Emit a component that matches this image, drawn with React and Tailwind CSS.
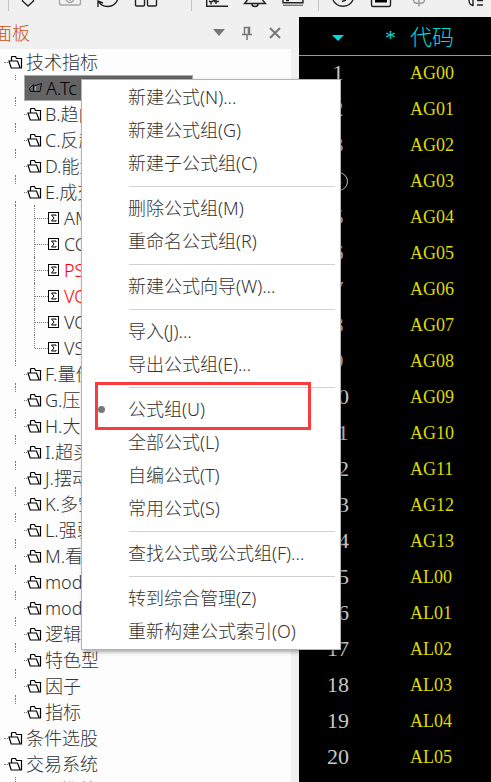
import React from 'react';

const TREE = [
  { label: 'A.Tc', selected: true },
  { label: 'B.趋向型' },
  { label: 'C.反趋向型' },
  { label: 'D.能量型' },
  {
    label: 'E.成交量型',
    children: [
      { label: 'AMO' },
      { label: 'CCL' },
      { label: 'PSY', hot: true },
      { label: 'VOL', hot: true },
      { label: 'VOSC' },
      { label: 'VSTD' },
    ],
  },
  { label: 'F.量价型' },
  { label: 'G.压力型' },
  { label: 'H.大势型' },
  { label: 'I.超买型' },
  { label: 'J.摆动型' },
  { label: 'K.多空型' },
  { label: 'L.强弱型' },
  { label: 'M.看盘型' },
  { label: 'mod1' },
  { label: 'mod2' },
  { label: '逻辑型' },
  { label: '特色型' },
  { label: '因子' },
  { label: '指标' },
];

const MENU = [
  ['新建公式(N)...', '新建公式组(G)', '新建子公式组(C)'],
  ['删除公式组(M)', '重命名公式组(R)'],
  ['新建公式向导(W)...'],
  ['导入(J)...', '导出公式组(E)...'],
  ['公式组(U)', '全部公式(L)', '自编公式(T)', '常用公式(S)'],
  ['查找公式或公式组(F)...'],
  ['转到综合管理(Z)', '重新构建公式索引(O)'],
];

const CHECKED = '公式组(U)';
const CIRCLED = 4;

const CODES = [
  'AG00', 'AG01', 'AG02', 'AG03', 'AG04', 'AG05', 'AG06', 'AG07', 'AG08', 'AG09',
  'AG10', 'AG11', 'AG12', 'AG13', 'AL00', 'AL01', 'AL02', 'AL03', 'AL04', 'AL05',
];

const ToolButton = ({ label, children }) => (
  <button aria-label={label} className="w-[38px] h-[17px] shrink-0 flex justify-center text-[#222]">
    <svg width="24" height="12" viewBox="0 0 24 12" fill="none" stroke="currentColor" strokeWidth="1.4">
      {children}
    </svg>
  </button>
);

const ToolDivider = () => <span className="w-px h-[11px] shrink-0 bg-[#c4c4c4]" />;

function Toolbar() {
  return (
    <div className="flex h-[17px] shrink-0 overflow-hidden">
      <div className="flex pl-2 pr-1">
        <ToolDivider />
        <ToolButton label="下载"><path d="M6.500 0v1l5.500 5 5.500-5V0" /></ToolButton>
      </div>
      <div className="flex pr-[26px]">
        <ToolButton label="截图">
          <g stroke="#a8a8a8">
            <path d="M1.500 0v3.500q0 1.500 1.500 1.500h18q1.500 0 1.500-1.500V0" />
            <path d="M8 0q4 5 8 0M12 0v1" />
          </g>
        </ToolButton>
        <ToolButton label="刷新"><path d="M2 7V1l5 2M2.500 1C6 8.500 18 8.500 21.500 0" /></ToolButton>
        <ToolButton label="布局"><path d="M1.500 0v5q0 1 1 1h7q1 0 1-1V0M13.500 0v5q0 1 1 1h7q1 0 1-1V0" /></ToolButton>
      </div>
      <ToolDivider />
      <div className="flex px-[6px]">
        <ToolButton label="图表"><path d="M1 6.300h22M1.700 0v6M4 1l2 1v2.500M6 2l4-2M11 0v4M9 1.500h5" /></ToolButton>
        <ToolButton label="提醒"><path d="M4.500 0L1.500 3.500h21L19.500 0M9 4q0 2.500 3 2.500T15 4" /></ToolButton>
        <ToolButton label="抽屉">
          <path d="M2 0v2.700h20V0M5 .5h3" />
          <path stroke="#777" d="M2 5.300h20" />
        </ToolButton>
      </div>
      <ToolDivider />
      <div className="flex px-[5px]">
        <ToolButton label="时钟"><path d="M2 0q3 6.300 10 6.300T22 0M11 1.500L15 0" /></ToolButton>
        <ToolButton label="窗口">
          <path d="M2.500 0v5q0 1.500 1.500 1.500h16q1.500 0 1.500-1.500V0" />
          <rect x="6" y="0" width="12" height="2.500" fill="#000" stroke="none" />
        </ToolButton>
        <ToolButton label="资金"><path stroke="#999" d="M6.500 0q0 3.500 5.500 3.500T17.500 0M12 0v6.500" /></ToolButton>
      </div>
      <div className="flex pl-4">
        <ToolButton label="列表"><path d="M3 0q0 5 4 5.500V0M11 .5h6M11 5h6" /></ToolButton>
      </div>
    </div>
  );
}

const FolderIcon = ({ open }) =>
  open ? (
    <svg width="15" height="14" viewBox="0 0 15 14" fill="none" stroke="#111">
      <path d="M1.500 7.500L5.500 3.500v7H2.500zM5.500 5l8-2.500-1.500 8-6.500 0" />
      <path d="M7.500 5.500v4" stroke="#aaa" />
    </svg>
  ) : (
    <svg width="15" height="14" viewBox="0 0 15 14" fill="none" stroke="#000" strokeWidth="1.200">
      <path d="M3.500 5.500V2.500q0-1 1-1h3l1 2h5v9.500H3.200L1 6h8.500l2.500 6.500" />
    </svg>
  );

const SigmaIcon = () => (
  <svg width="12" height="12" viewBox="0 0 12 12" fill="none" stroke="#000">
    <rect x="0.500" y="0.500" width="10" height="11" fill="#fff" />
    <path d="M8 4V3H3.500l2.500 3-2.500 3H8V8" />
  </svg>
);

const DotsH = ({ className }) => (
  <span className={`h-px border-t border-dotted border-[#777] ${className}`} />
);

function TreeItem({ item, last }) {
  return (
    <li>
      <div className="flex h-[26px]">
        <div className="w-[15px]" />
        <div className="w-[9px] flex flex-col justify-between">
          <span className="h-[5px] border-l border-dotted border-[#777]" />
          {!last && <span className="h-1 border-l border-dotted border-[#777]" />}
        </div>
        <div className={`flex items-center whitespace-nowrap ${item.selected ? 'w-[169px] bg-[#646464] border border-[#aaa] text-black' : ''}`}>
          <DotsH className="w-[3px]" />
          <FolderIcon open={item.selected} />
          <span className="pl-[3px]">{item.label}</span>
        </div>
      </div>
      {item.children && (
        <ul className="ml-[15px] border-l border-dotted border-[#777]">
          {item.children.map((child, i) => (
            <li key={child.label} className="flex items-center h-[26px] pl-[18px]">
              <span className={`border-l border-dotted border-[#777] ${i === item.children.length - 1 ? 'h-[13px] self-start' : 'h-[26px]'}`} />
              <DotsH className="w-[13px]" />
              <SigmaIcon />
              <span className={`pl-1 ${child.hot ? 'text-[#f00]' : ''}`}>{child.label}</span>
            </li>
          ))}
        </ul>
      )}
    </li>
  );
}

const RootItem = ({ label }) => (
  <div className="flex items-center h-[26px] pl-1">
    <DotsH className="w-1" />
    <FolderIcon />
    <span className="pl-[3px]">{label}</span>
  </div>
);

function FormulaPanel() {
  return (
    <aside className="w-[299px] shrink-0 flex flex-col pr-2">
      <header className="flex items-center h-8 shrink-0 pr-[2px] text-[#777]">
        <h2 className="flex-1 -ml-[6px] text-[#c8500a]">面板</h2>
        <button aria-label="选项" className="w-7 flex justify-center">
          <svg width="12" height="8" viewBox="0 0 12 8" fill="currentColor"><path d="M0 0h12L6 7z" /></svg>
        </button>
        <button aria-label="固定" className="w-7 flex justify-center">
          <svg width="12" height="14" viewBox="0 0 12 14" fill="none" stroke="currentColor" strokeWidth="1.500">
            <path d="M3.500 8V1.500h5V8M1 8.500h10M6 9v5M7.500 2v6" />
          </svg>
        </button>
        <button aria-label="关闭" className="w-7 flex justify-center">
          <svg width="12" height="12" viewBox="0 0 12 12" stroke="currentColor" strokeWidth="2">
            <path d="M1 1l10 10M11 1L1 11" />
          </svg>
        </button>
      </header>
      <div className="flex-1 bg-[#fdfdfd] text-[#333]">
        <RootItem label="技术指标" />
        <ul>
          {TREE.map((item, i) => (
            <TreeItem key={item.label} item={item} last={i === TREE.length - 1} />
          ))}
        </ul>
        <RootItem label="条件选股" />
        <RootItem label="交易系统" />
        <ul>
          <TreeItem item={{ label: 'C.推荐' }} />
        </ul>
      </div>
    </aside>
  );
}

function QuoteTable() {
  return (
    <section className="flex-1 bg-black">
      <table className="w-full table-fixed border-collapse text-left font-['Liberation_Serif','Noto_Sans_CJK_SC',serif]">
        <thead>
          <tr className="h-[38px] border-b border-[#00dcdc] text-[#00dcdc] text-[22px] leading-8">
            <th className="w-[78px] p-0 pt-1 font-light">
              <svg className="mx-auto" width="12" height="6" viewBox="0 0 12 6" fill="currentColor" aria-label="排序">
                <path d="M0 0h12L6 6z" />
              </svg>
            </th>
            <th className="w-[33px] p-0 pt-1 pl-2 font-light">*</th>
            <th className="p-0 pt-1 font-light">代码</th>
          </tr>
        </thead>
        <tbody>
          {CODES.map((code, i) => (
            <tr key={code} className="h-9">
              <td className="p-0 text-center text-[22px] leading-8 text-[#c8c8c8]">
                {i + 1 === CIRCLED ? (
                  <span className="block mx-auto size-[19px] rounded-full border border-[#c8c8c8] text-[14px] leading-4">
                    {i + 1}
                  </span>
                ) : (
                  i + 1
                )}
              </td>
              <td className="p-0" />
              <td className="p-0 text-[18px] leading-8 text-[#dcdc00]">{code}</td>
            </tr>
          ))}
        </tbody>
      </table>
    </section>
  );
}

function ContextMenu() {
  return (
    <div
      role="menu"
      className="absolute left-[81px] top-[79px] w-[260px] pt-[2px] bg-white border border-[#b4b4b4] text-[#333] shadow-[2px_2px_4px_rgba(0,0,0,0.35)]"
    >
      {MENU.map((group, g) => (
        <React.Fragment key={group[0]}>
          {g > 0 && <hr className="ml-[47px] mr-[5px] mt-[5px] mb-[6px] border-[#d0d0d0]" />}
          {group.map(label => (
            <button key={label} role="menuitem" className="flex items-center w-full h-[33px] pl-4 pb-[3px] text-left">
              <span className="w-[30px] shrink-0">
                {label === CHECKED && <span className="block size-[7px] rounded-full bg-[#777]" />}
              </span>
              {label}
            </button>
          ))}
        </React.Fragment>
      ))}
      {/* red marker around the checked group */}
      <div className="absolute left-[13px] top-[302px] w-[216px] h-12 border-3 border-[#fa3c3c] pointer-events-none" />
    </div>
  );
}

export default function App() {
  return (
    <div className="relative flex flex-col h-screen overflow-hidden bg-[#f0f0f0] text-[18px] leading-6 font-light font-['Noto_Sans','Noto_Sans_CJK_SC',sans-serif]">
      <Toolbar />
      <main className="flex flex-1 min-h-0">
        <FormulaPanel />
        <QuoteTable />
      </main>
      <ContextMenu />
    </div>
  );
}
